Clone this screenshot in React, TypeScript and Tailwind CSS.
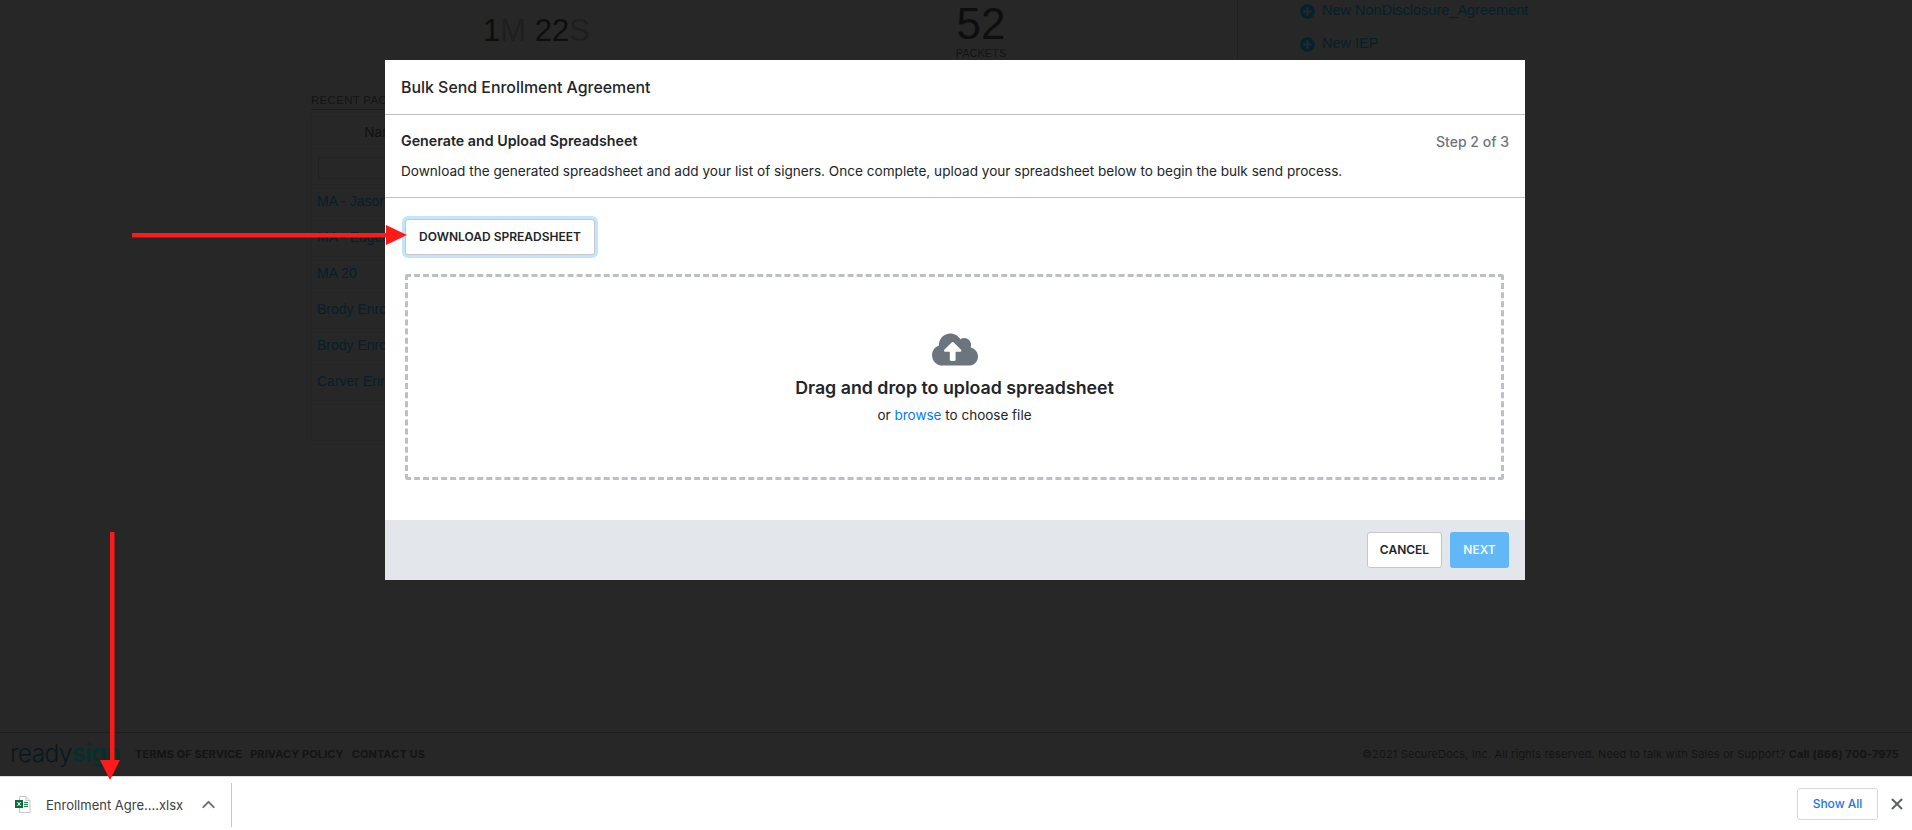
import React from 'react';
import { FaCloudUploadAlt, FaPlusCircle } from 'react-icons/fa';
import { ChevronUp, X } from 'lucide-react';

const PACKETS = ['MA - Jason Enrollment', 'MA - Eugene', 'MA 20', 'Brody Enrollment', 'Brody Enrollment', 'Carver Enrollment'];

const PageBehind: React.FC = () => (
  <div className="flex-1 min-h-0 pl-[311px] font-['Liberation_Sans',sans-serif]">
    <div className="flex h-[92px]">
      <div className="w-[172px]"></div>
      <div className="w-[370px] pt-[16px] text-[31px] leading-[30px] text-[#0e0e0e]">
        1<span className="text-[#1f1f1f]">M</span> 22<span className="text-[#1f1f1f]">S</span>
      </div>
      <div className="w-[256px] h-[60px] pt-[1px] text-center">
        <div className="text-[44px] leading-[46px] text-[#0e0e0e]">52</div>
        <div className="text-[11px] leading-[13px] text-[#141414]">PACKETS</div>
      </div>
      <div className="h-[58px] border-l border-[#1f1f1f] ml-[128px] pl-[62px]">
        <div className="flex items-center gap-[7px] h-[22px] text-[14.5px] text-[#05202b] whitespace-nowrap">
          <FaPlusCircle className="w-[15px] h-[15px] text-[#03222f]" />
          New NonDisclosure_Agreement
        </div>
        <div className="flex items-center gap-[7px] h-[22px] mt-[11px] text-[14.5px] text-[#05202b] whitespace-nowrap">
          <FaPlusCircle className="w-[15px] h-[15px] text-[#03222f]" />
          New IEP
        </div>
      </div>
    </div>
    <div className="w-[600px] h-[18px] text-[11.5px] leading-[16px] tracking-[0.3px] text-[#141414] border-b border-[#1c1c1c]">RECENT PACKETS</div>
    <div className="w-[600px] mt-[6px] border border-[#242424]">
      <div className="w-[142px] h-[31px] leading-[31px] text-[14px] text-center text-[#111]">Name</div>
      <div className="h-[36px] border-t border-[#242424] px-[6px] pt-[8px]">
        <div className="w-[200px] h-[22px] border border-[#222] rounded-[3px]"></div>
      </div>
      {PACKETS.map((name, i) => (
        <div key={i} className="h-[36px] border-t border-[#242424] px-[5px] leading-[33px] text-[14px] text-[#05202b] whitespace-nowrap">
          {name}
        </div>
      ))}
      <div className="h-[40px] border-t border-[#242424]"></div>
    </div>
  </div>
);

const Modal: React.FC = () => (
  <div className="absolute left-[385px] top-[60px] w-[1140px] h-[520px] bg-white flex flex-col font-['Inter',sans-serif] text-[#212529]">
    <div className="h-[55px] shrink-0 border-b border-[#b9c0c8] px-[16px] pt-[2px] flex items-center text-[15.9px] font-medium">
      Bulk Send Enrollment Agreement
    </div>
    <div className="h-[83px] shrink-0 border-b border-[#bcc0c8] px-[16px] pt-[16px]">
      <div className="flex justify-between h-[20px] items-center text-[14px]">
        <span className="font-semibold text-[14.25px]">Generate and Upload Spreadsheet</span>
        <span className="text-[#6c757d] font-medium">Step 2 of 3</span>
      </div>
      <p className="mt-[10px] text-[13.6px] leading-[20px]">
        Download the generated spreadsheet and add your list of signers. Once complete, upload your spreadsheet below to begin the bulk send process.
      </p>
    </div>
    <div className="flex-1 min-h-0 pl-[20px] pr-[21px] pt-[21px]">
      <button className="block w-[190px] h-[36px] bg-white border border-[#c4c8cd] rounded-[3px] ring-[3px] ring-[#c3e4fb] text-[12px] font-semibold text-[#212529]">
        DOWNLOAD SPREADSHEET
      </button>
      <div className="mt-[19px] h-[206px] border-[3px] border-dashed border-[#bcc0c6] rounded-[3px] flex flex-col items-center pt-[54px]">
        <FaCloudUploadAlt className="w-[46px] h-[37px] text-[#6c757d]" />
        <div className="mt-[7px] text-[17.8px] leading-[26px] font-semibold">Drag and drop to upload spreadsheet</div>
        <div className="mt-[3px] text-[13.5px] leading-[22px]">
          or <span className="text-[#007bff]">browse</span> to choose file
        </div>
      </div>
    </div>
    <div className="h-[60px] shrink-0 bg-[#e3e6ea] flex items-center justify-end gap-[8px] pr-[16px]">
      <button className="w-[75px] h-[36px] bg-white border border-[#c4c8cd] rounded-[3px] text-[12px] font-semibold text-[#212529]">CANCEL</button>
      <button className="w-[59px] h-[36px] bg-[#62b8f6] rounded-[3px] text-[12px] font-semibold text-[#eef7fe]">NEXT</button>
    </div>
  </div>
);

const Footer: React.FC = () => (
  <div className="h-[44px] shrink-0 border-t border-[#1e1e1e] pl-[10px] pr-[13px] flex items-center font-['Inter',sans-serif]">
    <div className="w-[125px] text-[24.5px] leading-[30px] -mt-[4px] tracking-[-0.6px] whitespace-nowrap text-[#0a1720] font-light">
      ready<span className="font-bold text-[#06302c]">sign</span>
    </div>
    <div className="flex gap-[8px] text-[11px] font-bold tracking-[0.08px] text-[#141414] whitespace-nowrap">
      <span>TERMS OF SERVICE</span>
      <span>PRIVACY POLICY</span>
      <span>CONTACT US</span>
    </div>
    <div className="ml-auto text-[11px] tracking-[0.13px] text-[#141414] whitespace-nowrap">
      ©2021 SecureDocs, Inc. All rights reserved. Need to talk with Sales or Support? <span className="font-bold">Call (866) 700-7975</span>
    </div>
  </div>
);

const ExcelIcon: React.FC = () => (
  <svg width="16" height="17" viewBox="0 0 16 17">
    <path d="M4.5 0.5H11L15 4.5V16.5H4.5Z" fill="#fff" stroke="#c4c7c9" />
    <path d="M11 0.5V4.5H15" fill="#eee" stroke="#c4c7c9" />
    <rect x="0" y="4" width="8" height="8" fill="#0f6b3a" />
    <path d="M2.3 6L5.7 10M5.7 6L2.3 10" stroke="#fff" strokeWidth="1" />
    <path d="M9 6.5H13M9 8.5H13M9 10.5H13" stroke="#1d8a4b" strokeWidth="1" />
  </svg>
);

const DownloadBar: React.FC = () => (
  <div className="h-[54px] shrink-0 bg-white border-t border-[#d9d9d9] flex items-center font-['Inter',sans-serif]">
    <div className="ml-[15px] mt-[2px]"><ExcelIcon /></div>
    <span className="ml-[15px] mt-[4px] w-[145px] text-[13px] text-[#3c4043] whitespace-nowrap">Enrollment Agre....xlsx</span>
    <ChevronUp className="w-[21px] h-[21px] text-[#6b6f73] ml-[7px] mt-[2px]" strokeWidth={2.2} />
    <div className="ml-[12px] mt-[2px] w-px h-[44px] bg-[#c8c8c8]"></div>
    <button className="ml-auto mt-[1px] w-[81px] h-[32px] border border-[#d5d8dc] rounded-[3px] text-[12px] font-medium text-[#1a73e8]">Show All</button>
    <X className="ml-[10px] mr-[6px] mt-[1px] w-[18px] h-[18px] text-[#5f6368]" strokeWidth={2.6} />
  </div>
);

const App: React.FC = () => {
  return (
    <div className="relative w-[1912px] h-[830px] overflow-hidden bg-[#272727] flex flex-col">
      <PageBehind />
      <Footer />
      <DownloadBar />
      <Modal />
      {/* red annotation arrows */}
      <svg className="absolute left-[130px] top-[222px]" width="280" height="26" viewBox="0 0 280 26">
        <rect x="2" y="11" width="256" height="4.5" fill="#fc1a1a" />
        <path d="M256 3L277 13L256 23Z" fill="#fc1a1a" />
      </svg>
      <svg className="absolute left-[98px] top-[532px]" width="24" height="250" viewBox="0 0 24 250">
        <rect x="12" y="0" width="4.5" height="230" fill="#fc1a1a" />
        <path d="M2 228H22L12 248Z" fill="#fc1a1a" />
      </svg>
    </div>
  );
};

export default App;
